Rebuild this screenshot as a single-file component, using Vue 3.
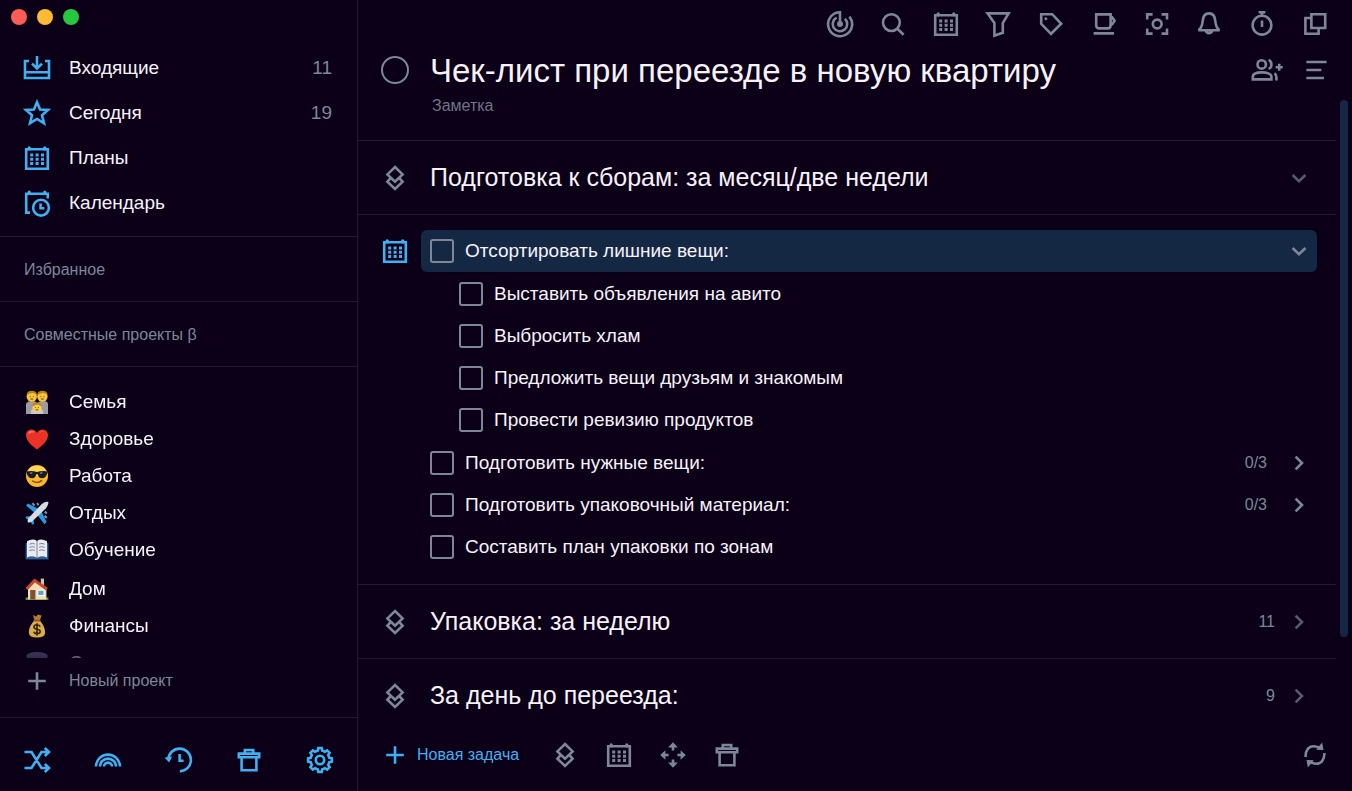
<script setup>
import { ref } from 'vue'

const calendar =
  '<path d="M3.2 5.2H24.8V24.8H3.2Z"/><path stroke-width="3.2" stroke-linecap="round" d="M6.2 5V3.8M21.8 5V3.8"/>' +
  '<path stroke-width="3" stroke-dasharray="3 2.4" d="M7.2 11H21M7.2 15.2H21M7.2 19.4H21"/>'

function gearPath() {
  const teeth = 8
  const step = (Math.PI * 2) / teeth
  const points = []
  for (let i = 0; i < teeth; i++) {
    const a = i * step - Math.PI / 2
    for (const [offset, r] of [[-0.3, 9.6], [-0.19, 12], [0.19, 12], [0.3, 9.6]]) {
      const t = a + offset * step
      points.push(`${(14 + r * Math.cos(t)).toFixed(2)} ${(14 + r * Math.sin(t)).toFixed(2)}`)
    }
  }
  return `M${points.join('L')}Z`
}

const icons = {
  inbox: '<path d="M6 7H2V24H26V7H22M2 18.2H26M14 2V14M9 9.6L14 14.4L19 9.6"/>',
  star: '<path d="M14 3.2L17.1 10.6L25 10.9L19 16.3L21 24.2L14 20L7 24.2L9 16.3L3 10.9L10.9 10.6Z"/>',
  calendar,
  calendarClock:
    '<path d="M7 23.6H3.2V4.8H24.8V9.5"/><path stroke-width="3.2" stroke-linecap="round" d="M6.2 4.4V3.2M21.8 4.4V3.2"/><circle cx="18" cy="18.7" r="7.9"/><path d="M17.6 14.6V19.2H21.4"/>',
  shuffle:
    '<path d="M1.5 6H8.5L18.5 22H26M1.5 22H8.5L18.5 6H26M21.8 2L26 6L21.8 10M21.8 18L26 22L21.8 26"/>',
  rainbow:
    '<path d="M2 20.6A12 12 0 0 1 26 20.6M6 20.6A8 8 0 0 1 22 20.6M10 20.6A4 4 0 0 1 18 20.6"/>',
  history:
    '<path d="M3.3 13.5A11.3 11.3 0 1 1 14.8 25.2M14.6 8V14.8H18.6"/><path stroke-width="1.4" fill="currentColor" d="M0.9 12L4 15.2L6 11.4Z"/>',
  trash: '<path d="M3.8 7.6H24.2V11.2H3.8ZM9.8 7V4H18.2V7M6.6 11.5V24.2H21.4V11.5"/>',
  gear: `<path d="${gearPath()}"/><circle cx="14" cy="14" r="4.2"/>`,
  radar:
    '<path d="M14 14V2.2A12 12 0 1 0 23.4 6.6M10.6 7.7A7.2 7.2 0 1 0 18.9 8.8"/><circle cx="14" cy="14" r="3" fill="currentColor" stroke="none"/>',
  search: '<circle cx="12.4" cy="12.6" r="8.4"/><path d="M18.4 18.8L24.6 24.8"/>',
  filter: '<path d="M3.6 3.4H24.6L18.8 13V22.8L10.4 25.6V13Z"/>',
  tag: '<path d="M4.2 4.2H15.2L24.2 13.8L14 23.8L4.2 13.8Z"/><circle cx="8.9" cy="8.7" r="1.5" fill="currentColor" stroke="none"/>',
  cup: '<path d="M6.2 4.4H20.6V15.2Q20.6 18.4 17.4 18.4H9.4Q6.2 18.4 6.2 15.2ZM20.8 7.4H22.2L24.6 10.8L22.2 14.2H20.8M3.6 23.4H24"/>',
  focus:
    '<path d="M4.2 9.4V4.4H9.6M18.6 4.4H24V9.4M24 18.4V23.6H18.6M9.6 23.6H4.2V18.4"/><circle cx="14.2" cy="14" r="4.4"/>',
  bell: '<path d="M3.4 20.2C6.6 18.6 7.2 15.6 7.8 10.6C8.2 5.8 10.6 3.4 14 3.4S19.8 5.8 20.2 10.6C20.8 15.6 21.4 18.6 24.6 20.2ZM10.8 20.6A3.3 3.3 0 0 0 17.2 20.6"/>',
  timer: '<circle cx="14" cy="15.2" r="9.4"/><path d="M10.6 2.2H17.4M14 2V5.4M14 10.6V17"/>',
  windows: '<path d="M10.4 4.2H24.2V18H10.4ZM10 8H4.4V23.8H17.6V18.6"/>',
  menu: '<path d="M4.4 6H24.6M4.4 14H19.4M4.4 22H22"/>',
  layers: '<path d="M14 3L21.6 10.4L14 17.8L6.4 10.4ZM9.8 14L6.4 17.6L14 25L21.6 17.6L18.2 14"/>',
  plus: '<path d="M14 5.2V22.8M5.2 14H22.8"/>',
  move:
    '<path d="M14 9.6V5M14 18.4V23M9.6 14H5M18.4 14H23"/><path fill="currentColor" stroke-width="1.6" d="M11 5.6L14 2.4L17 5.6ZM11 22.4L14 25.6L17 22.4ZM5.6 11L2.4 14L5.6 17ZM22.4 11L25.6 14L22.4 17Z"/>',
  sync:
    '<path d="M4.6 16C4.4 9 8 5 13 5.2C15.6 5.4 17.4 6 19 7.2M23.4 12C23.6 19 20 23 15 22.8C12.4 22.6 10.6 22 9 20.8"/><path fill="currentColor" stroke-width="1.2" d="M20.8 2.8L21.8 8.4L16.4 8.2ZM7.2 25.2L6.2 19.6L11.6 19.8Z"/>',
  chevronDown: '<path d="M7.6 11L14 17.2L20.4 11"/>',
  chevronRight: '<path d="M10.6 7.6L17 14L10.6 20.4"/>',
}

const emojis = {
  family:
    '<path fill="#9b9ba0" d="M1 24V14q1-3 6-3t5 3q1-3 6-3t5 3V24Z"/><path fill="#c9c9cd" d="M6 24v-3q1-3 6-3t6 3v3Z"/><circle cx="6.8" cy="6.5" r="5.2" fill="#f7c53c"/><circle cx="17.4" cy="6.5" r="5.2" fill="#f7c53c"/><circle cx="12" cy="17.5" r="4.6" fill="#f9cd4a"/><path fill="#b98415" d="M1.6 5Q2 .8 6.8.8T12 5Q9 2.6 6.8 3T1.6 5ZM12.2 5q.4-4.2 5.2-4.2T22.6 5q-3-2.4-5.2-2T12.2 5ZM7.4 16.6q.4-4 4.6-4t4.6 4q-3-2.4-4.6-2t-4.6 2Z"/><path fill="none" stroke="#6b4312" stroke-width="1" d="M4.8 6.6h.8M8 6.6h.8M5.4 9h2.8M15.4 6.6h.8M18.6 6.6h.8M16 9h2.8M10.2 17.4h.8M13 17.4h.8M10.8 19.8h2.4"/>',
  heart:
    '<path fill="#ea3326" d="M12 22.4C7 19 1 13.8 1 8.2C1 4.8 3.4 2.4 6.4 2.4C8.8 2.4 11 3.8 12 6C13 3.8 15.2 2.4 17.6 2.4C20.6 2.4 23 4.8 23 8.2C23 13.8 17 19 12 22.4Z"/><path fill="#ff7a66" d="M3 7.4Q3.2 4.4 6.2 4Q9 4 9.6 5.4Q6 5 3 7.4ZM14.4 5.4Q17 3.4 19.6 4.6Q17 4.6 14.4 5.4Z"/>',
  cool:
    '<circle cx="12" cy="12" r="11" fill="#f9b92b"/><ellipse cx="12" cy="7" rx="8.6" ry="5" fill="#fdd652"/><path fill="#1d1a1c" d="M1.4 7.4Q7 6.2 12 8Q17 6.2 22.6 7.4L22 10Q20.6 14.4 16.8 14.2Q13.4 14 12.8 10.2H11.2Q10.6 14 7.2 14.2Q3.4 14.4 2 10Z"/><path stroke="#7d8790" stroke-width="1.4" d="M5 9.4L7.4 8.6M15 9.4L17.4 8.6"/><path fill="none" stroke="#7c4510" stroke-width="1.4" stroke-linecap="round" d="M7.6 17Q12.6 20 16.6 16.6"/>',
  plane:
    '<path fill="#259be0" d="M14.5 8.5L3 2.6L1 4.6L10.5 12.5ZM16 9.5L21.6 21L19.4 23.2L12 13.5ZM6.2 15.6L1.4 15.2L.4 17L4.6 19.4ZM8.2 17.6L9.2 22.4L7.4 23.8L5 19.4Z"/><path fill="#d5dce3" d="M23.2.8Q24 3.8 21 7.2L7.4 20.2Q4.4 22 2.8 21.2Q2 19.4 4 16.6L16.8 3Q20.4 0 23.2.8Z"/><path stroke="#8297a8" stroke-width="2" d="M7.4 2.2L9.4 4.6M12 2.2L13.6 4.2M21.8 17L19.6 14.8M21.8 12.4L19.8 10.6"/>',
  book:
    '<path fill="#2e5f96" d="M.6 5H23.4V21.4H.6Z"/><path fill="#e8eaf0" d="M2 3.2Q8 0 12 3Q16 0 22 3.2V19.4Q16 16.8 12 19.8Q8 16.8 2 19.4Z"/><path fill="none" stroke="#78839a" d="M12 3V20M4.4 6.2Q7.4 4.8 9.8 6M4.4 9.4Q7.4 8 9.8 9.2M4.4 12.6Q7.4 11.2 9.8 12.4M14.2 6Q17 4.8 19.6 6.2M14.2 9.2Q17 8 19.6 9.4M14.2 12.4Q17 11.2 19.6 12.6"/>',
  house:
    '<path fill="#4c9a3d" d="M.6 20.4H23.4V23H.6Z"/><path fill="#c9c2b8" d="M15.8 1.6H19V8H15.8Z"/><path fill="#f3dcb6" d="M3 10.6L11 3.4L21.4 11V22.6H3Z"/><path fill="none" stroke="#c8452e" stroke-width="3" d="M1.6 12L9.6 3.4L22 12.2"/><path fill="#7e5230" d="M5.2 13H10.4V22.6H5.2Z"/><path fill="#55a5d6" stroke="#fff" d="M12.8 13.2H19V18.6H12.8Z"/>',
  money:
    '<path fill="#b07a3a" d="M8 1L11 2.4L13 .6L16.6 1.4L14.8 6.6H9.4Z"/><path fill="#ddab4b" d="M9.2 6.4H14.8C18 10 20.6 14.6 20 19.4Q19.6 23.4 12 23.4T4 19.4C3.4 14.6 6 10 9.2 6.4Z"/><path stroke="#8c5a1d" stroke-width="1.8" d="M8.6 6.6H15.4"/><path fill="none" stroke="#34240e" stroke-width="1.6" d="M15.2 12.8Q14.4 10.8 12 10.8Q9 10.8 9 13Q9 14.8 12 15.2Q15.2 15.6 15.2 17.6Q15.2 19.8 12 19.8Q9.4 19.8 8.8 17.8M12 9.2V21.4"/>',
  officer:
    '<path fill="#6a6f96" d="M1 5Q3 1 12 1T23 5L20 10H4Z"/><path fill="#b9a98a" d="M5 8H19V16Q17 23 12 23T5 16Z"/>',
}

const nav = [
  { icon: 'inbox', label: 'Входящие', count: 11 },
  { icon: 'star', label: 'Сегодня', count: 19 },
  { icon: 'calendar', label: 'Планы' },
  { icon: 'calendarClock', label: 'Календарь' },
]

const projectGroups = [
  [
    { emoji: 'family', label: 'Семья' },
    { emoji: 'heart', label: 'Здоровье' },
    { emoji: 'cool', label: 'Работа' },
    { emoji: 'plane', label: 'Отдых' },
    { emoji: 'book', label: 'Обучение' },
  ],
  [
    { emoji: 'house', label: 'Дом' },
    { emoji: 'money', label: 'Финансы' },
    { emoji: 'officer', label: 'С' },
  ],
]

const sidebarTools = [
  { icon: 'shuffle', label: 'Перемешать' },
  { icon: 'rainbow', label: 'Тема' },
  { icon: 'history', label: 'История' },
  { icon: 'trash', label: 'Корзина' },
  { icon: 'gear', label: 'Настройки' },
]

const topTools = [
  { icon: 'radar', label: 'Обзор' },
  { icon: 'search', label: 'Поиск' },
  { icon: 'calendar', label: 'Дата' },
  { icon: 'filter', label: 'Фильтр' },
  { icon: 'tag', label: 'Метки' },
  { icon: 'cup', label: 'Перерыв' },
  { icon: 'focus', label: 'Фокус' },
  { icon: 'bell', label: 'Уведомления' },
  { icon: 'timer', label: 'Таймер' },
  { icon: 'windows', label: 'Окна' },
]

const bottomTools = [
  { icon: 'layers', label: 'Новый раздел' },
  { icon: 'calendar', label: 'Запланировать' },
  { icon: 'move', label: 'Переместить' },
  { icon: 'trash', label: 'Удалить' },
]

const tasks = ref([
  {
    id: 'sort',
    label: 'Отсортировать лишние вещи:',
    done: false,
    open: true,
    children: [
      { id: 'avito', label: 'Выставить объявления на авито', done: false },
      { id: 'junk', label: 'Выбросить хлам', done: false },
      { id: 'friends', label: 'Предложить вещи друзьям и знакомым', done: false },
      { id: 'food', label: 'Провести ревизию продуктов', done: false },
    ],
  },
  { id: 'needed', label: 'Подготовить нужные вещи:', done: false, progress: '0/3' },
  { id: 'packing', label: 'Подготовить упаковочный материал:', done: false, progress: '0/3' },
  { id: 'plan', label: 'Составить план упаковки по зонам', done: false },
])

const laterSections = [
  { label: 'Упаковка: за неделю', count: 11 },
  { label: 'За день до переезда:', count: 9 },
]
</script>

<template>
  <div class="app">
    <aside class="sidebar">
      <div class="window-controls">
        <button class="light close" aria-label="Закрыть"></button>
        <button class="light minimise" aria-label="Свернуть"></button>
        <button class="light expand" aria-label="Развернуть"></button>
      </div>

      <nav class="nav">
        <a v-for="item in nav" :key="item.label" href="#" class="nav-row">
          <svg class="icon" viewBox="0 0 28 28" v-html="icons[item.icon]"></svg>
          <span class="grow">{{ item.label }}</span>
          <span v-if="item.count" class="nav-count">{{ item.count }}</span>
        </a>
      </nav>

      <h2 class="group-title">Избранное</h2>
      <h2 class="group-title">Совместные проекты β</h2>

      <div class="projects">
        <ul v-for="(group, i) in projectGroups" :key="i" class="project-group">
          <li v-for="project in group" :key="project.label">
            <a href="#" class="project-row">
              <svg class="emoji" viewBox="0 0 24 24" v-html="emojis[project.emoji]"></svg>
              <span>{{ project.label }}</span>
            </a>
          </li>
        </ul>
      </div>

      <button class="new-project">
        <svg class="icon" viewBox="0 0 28 28" v-html="icons.plus"></svg>
        <span>Новый проект</span>
      </button>

      <div class="sidebar-tools">
        <button v-for="tool in sidebarTools" :key="tool.icon" :aria-label="tool.label">
          <svg class="icon" viewBox="0 0 28 28" v-html="icons[tool.icon]"></svg>
        </button>
      </div>
    </aside>

    <main class="main">
      <div class="top-tools">
        <button v-for="tool in topTools" :key="tool.icon" :aria-label="tool.label">
          <svg class="icon" viewBox="0 0 28 28" v-html="icons[tool.icon]"></svg>
        </button>
      </div>

      <div class="body">
        <div class="content">
          <header class="head">
            <input type="checkbox" class="circle" aria-label="Завершить проект" />
            <div class="head-text">
              <h1>Чек-лист при переезде в новую квартиру</h1>
              <input class="note" type="text" placeholder="Заметка" aria-label="Заметка" />
            </div>
            <div class="head-tools">
              <button aria-label="Добавить участника">
                <svg class="icon wide" viewBox="0 0 32 28">
                  <circle cx="10.7" cy="8.4" r="4.2" />
                  <path d="M1.8 23.4V20.6C1.8 17.6 6.6 16.4 11 16.4S20.4 17.6 20.4 20.6V23.4Z" />
                  <path d="M17.6 4Q20.4 5 20.4 8.4T17.6 12.8M23.4 17.4Q25.4 18.8 25.4 20.8V24.4" />
                  <path d="M28.2 7.8V14.8M24.7 11.3H31.7" />
                </svg>
              </button>
              <button aria-label="Меню">
                <svg class="icon" viewBox="0 0 28 28" v-html="icons.menu"></svg>
              </button>
            </div>
          </header>

          <section class="section">
            <svg class="icon" viewBox="0 0 28 28" v-html="icons.layers"></svg>
            <h2 class="grow">Подготовка к сборам: за месяц/две недели</h2>
            <button class="faint" aria-label="Свернуть раздел">
              <svg class="icon" viewBox="0 0 28 28" v-html="icons.chevronDown"></svg>
            </button>
          </section>

          <div class="tasks">
            <button class="plan" aria-label="Запланировать">
              <svg class="icon" viewBox="0 0 28 28" v-html="icons.calendar"></svg>
            </button>
            <ul class="task-list">
              <li v-for="task in tasks" :key="task.id">
                <div class="task" :class="{ selected: task.open }">
                  <input :id="task.id" v-model="task.done" type="checkbox" class="box" />
                  <label :for="task.id" class="grow">{{ task.label }}</label>
                  <span v-if="task.progress" class="progress">{{ task.progress }}</span>
                  <button v-if="task.open || task.progress" aria-label="Подзадачи">
                    <svg
                      class="icon"
                      viewBox="0 0 28 28"
                      v-html="task.open ? icons.chevronDown : icons.chevronRight"
                    ></svg>
                  </button>
                </div>
                <ul v-if="task.children" class="subtasks">
                  <li v-for="child in task.children" :key="child.id" class="task">
                    <input :id="child.id" v-model="child.done" type="checkbox" class="box" />
                    <label :for="child.id" class="grow">{{ child.label }}</label>
                  </li>
                </ul>
              </li>
            </ul>
          </div>

          <section v-for="section in laterSections" :key="section.label" class="section">
            <svg class="icon" viewBox="0 0 28 28" v-html="icons.layers"></svg>
            <h2 class="grow">{{ section.label }}</h2>
            <span class="section-count">{{ section.count }}</span>
            <button class="faint" aria-label="Развернуть раздел">
              <svg class="icon" viewBox="0 0 28 28" v-html="icons.chevronRight"></svg>
            </button>
          </section>

          <footer class="bottom-tools">
            <button class="new-task">
              <svg class="icon" viewBox="0 0 28 28" v-html="icons.plus"></svg>
              <span>Новая задача</span>
            </button>
            <button v-for="tool in bottomTools" :key="tool.icon" :aria-label="tool.label">
              <svg class="icon" viewBox="0 0 28 28" v-html="icons[tool.icon]"></svg>
            </button>
            <button class="sync" aria-label="Синхронизировать">
              <svg class="icon" viewBox="0 0 28 28" v-html="icons.sync"></svg>
            </button>
          </footer>
        </div>
        <div class="rail"><div class="thumb"></div></div>
      </div>
    </main>
  </div>
</template>

<style>
body {
  margin: 0;
  background: #0b0017;
}
</style>

<style scoped>
.app {
  --line: #241b31;
  --grey: #7d8799;
  --blue: #3eb1f2;
  --text: #f7f2fb;
  display: grid;
  grid-template-columns: 358px minmax(0, 1fr);
  height: 100vh;
  background: #0b0017;
  color: var(--text);
  font-family: "Liberation Sans", Arial, sans-serif;
  font-size: 19px;
  overflow: hidden;
}

h1,
h2,
ul {
  margin: 0;
  padding: 0;
  font-weight: 400;
  list-style: none;
}

button {
  display: flex;
  align-items: center;
  padding: 0;
  border: 0;
  background: none;
  color: inherit;
  font: inherit;
}

a {
  color: inherit;
  text-decoration: none;
}

.grow {
  flex: 1;
}

.icon {
  flex: none;
  width: 28px;
  height: 28px;
  fill: none;
  stroke: currentColor;
  stroke-width: 2.6;
}

.icon.wide {
  width: 32px;
}

.sidebar {
  display: flex;
  flex-direction: column;
  min-height: 0;
  box-sizing: border-box;
  border-right: 1px solid var(--line);
}

.window-controls {
  display: flex;
  gap: 10px;
  padding: 9px 11px 20px;
}

.light {
  width: 16px;
  height: 16px;
  border-radius: 50%;
}

.close {
  background: #fb5d56;
}

.minimise {
  background: #fcbb30;
}

.expand {
  background: #26c840;
}

.nav {
  padding-bottom: 11px;
}

.nav-row {
  display: flex;
  align-items: center;
  gap: 18px;
  height: 45px;
  padding: 0 25px 0 23px;
}

.nav-row .icon {
  color: var(--blue);
}

.nav-count {
  color: var(--grey);
}

.group-title {
  padding: 1px 24px 0;
  border-top: 1px solid var(--line);
  color: var(--grey);
  font-size: 16px;
  line-height: 63px;
}

.projects {
  display: flex;
  flex: 1;
  flex-direction: column;
  gap: 2px;
  min-height: 0;
  padding-top: 16px;
  border-top: 1px solid var(--line);
  overflow: hidden;
  mask-image: linear-gradient(to top, #0006, #0008 8px, #000 20px);
}

.project-group {
  flex: none;
}

.project-row {
  display: flex;
  align-items: center;
  gap: 20px;
  height: 37px;
  padding: 0 25px;
}

.emoji {
  flex: none;
  width: 24px;
  height: 24px;
}

.new-project {
  gap: 18px;
  height: 45px;
  margin-bottom: 14px;
  padding: 0 23px;
  color: var(--grey);
  font-size: 16px;
}

.sidebar-tools {
  display: flex;
  justify-content: space-between;
  padding: 28px 23px 17px;
  border-top: 1px solid var(--line);
  color: var(--blue);
}

.main {
  display: flex;
  flex-direction: column;
  min-width: 0;
  min-height: 0;
}

.top-tools {
  display: flex;
  align-self: flex-end;
  justify-content: space-between;
  width: 503px;
  padding: 10px 23px;
  color: var(--grey);
}

.body {
  display: flex;
  flex: 1;
  min-height: 0;
}

.content {
  flex: 1;
  min-width: 0;
}

.rail {
  display: flex;
  flex-direction: column;
  width: 12px;
  padding-top: 52px;
  padding-left: 4px;
}

.rail::after {
  flex: 154;
  content: "";
}

.thumb {
  flex: 537;
  width: 8px;
  border-radius: 4px;
  background: #142844;
}

.head {
  display: flex;
  align-items: flex-start;
  height: 92px;
  padding-left: 23px;
}

.circle,
.box {
  flex: none;
  box-sizing: border-box;
  margin: 0;
  border: 2px solid var(--grey);
  appearance: none;
}

.circle {
  width: 28px;
  height: 28px;
  margin-top: 8px;
  border-radius: 50%;
}

.box {
  width: 24px;
  height: 24px;
  border-radius: 3px;
}

.circle:checked,
.box:checked {
  background: var(--blue);
}

.head-text {
  display: flex;
  flex: 1;
  flex-direction: column;
  padding-left: 21px;
}

h1 {
  font-size: 33px;
  line-height: 46px;
}

.note {
  width: 200px;
  height: 24px;
  margin: 0 2px;
  padding: 0;
  border: 0;
  background: none;
  color: var(--text);
  font: inherit;
  font-size: 16px;
}

.note::placeholder {
  color: #6f7486;
}

.head-tools {
  display: flex;
  gap: 19px;
  padding: 8px 6px 0 0;
  color: var(--grey);
}

.section {
  display: flex;
  align-items: center;
  height: 73px;
  padding: 0 23px;
  border-top: 1px solid var(--line);
}

.section > .icon {
  color: var(--grey);
}

.section h2 {
  padding-left: 21px;
  font-size: 25px;
}

.section-count,
.progress {
  color: var(--grey);
  font-size: 16px;
}

.section-count {
  padding-right: 10px;
}

.faint {
  color: #5a5a6b;
}

.tasks {
  display: flex;
  align-items: flex-start;
  padding: 15px 19px 16px 23px;
  border-top: 1px solid var(--line);
}

.plan {
  height: 42px;
  color: var(--blue);
}

.task-list {
  flex: 1;
  padding-left: 12px;
}

.task {
  display: flex;
  align-items: center;
  gap: 11px;
  height: 42px;
  padding: 0 4px 0 9px;
  border-radius: 6px;
}

.progress {
  padding-right: 7px;
}

.task button {
  color: var(--grey);
}

.selected {
  background: #142844;
}

.subtasks {
  margin: 1px 0;
  padding-left: 29px;
}

.bottom-tools {
  display: flex;
  align-items: center;
  gap: 26px;
  height: 46px;
  padding: 0 7px 0 23px;
  color: var(--grey);
}

.new-task {
  gap: 8px;
  margin-right: 6px;
  color: var(--blue);
  font-size: 16px;
}

.sync {
  margin-left: auto;
}
</style>
